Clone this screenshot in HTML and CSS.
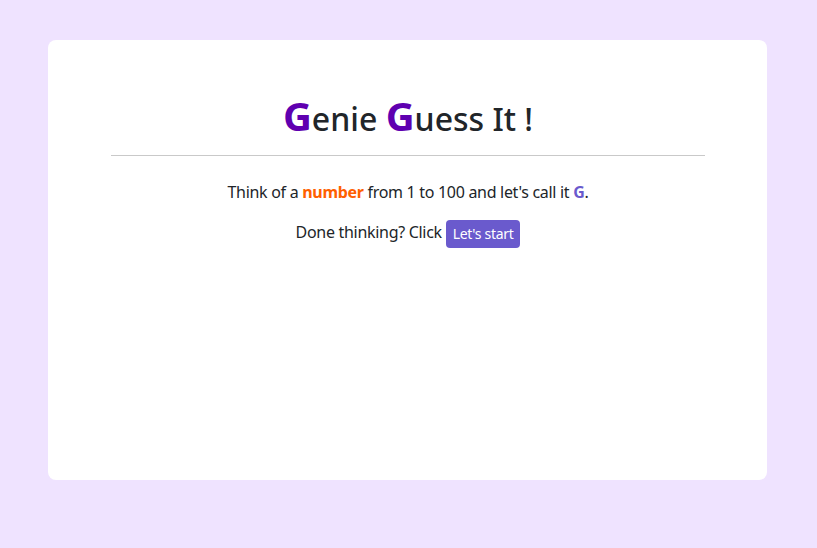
FILE: index.html
```html
<!DOCTYPE html>
<html>
<head>
<meta charset="utf-8">
<link rel="stylesheet" href="styles.css">
</head>
<body>
<main class="card">
  <h1 class="title"><span class="big">G</span>enie <span class="big">G</span>uess It !</h1>
  <hr class="rule">
  <p class="line">Think of a <strong class="num">number</strong> from 1 to 100 and let's call it <strong class="g">G</strong>.</p>
  <p class="line">Done thinking? Click <button class="btn">Let's start</button></p>
</main>
</body>
</html>
```
FILE: styles.css
```css
html, body { margin: 0; padding: 0; }
body {
  background: #efe3ff;
  font-family: "Noto Sans", "Open Sans", sans-serif;
  color: #212529;
  padding: 40px 50px 68px 48px;
  height: 548px;
  box-sizing: border-box;
}
.card {
  background: #fff;
  border-radius: 8px;
  height: 440px;
  padding: 0 62px 0 63px;
  display: flex;
  flex-direction: column;
  align-items: stretch;
  text-align: center;
}
.title {
  margin: 52px 0 0 0;
  font-size: 32px;
  font-weight: 500;
  line-height: 1.2;
}
.big { font-size: 40px; font-weight: 700; color: #5f00b0; }
.rule {
  border: 0;
  border-top: 1px solid #c9c9c9;
  margin: 15px 0 0 0;
}
.line { margin: 24px 0 0 0; font-size: 16px; line-height: 24px; letter-spacing: -0.3px; }
.line + .line { margin-top: 16px; }
.num { color: #ff6000; }
.g { color: #6a5acd; }
.btn {
  background: #6a5acd;
  color: #fff;
  border: 0;
  border-radius: 4px;
  font-family: inherit;
  font-size: 14px;
  letter-spacing: -0.3px;
  padding: 4px 7px;
  line-height: 20px;
  vertical-align: middle;
}
```
